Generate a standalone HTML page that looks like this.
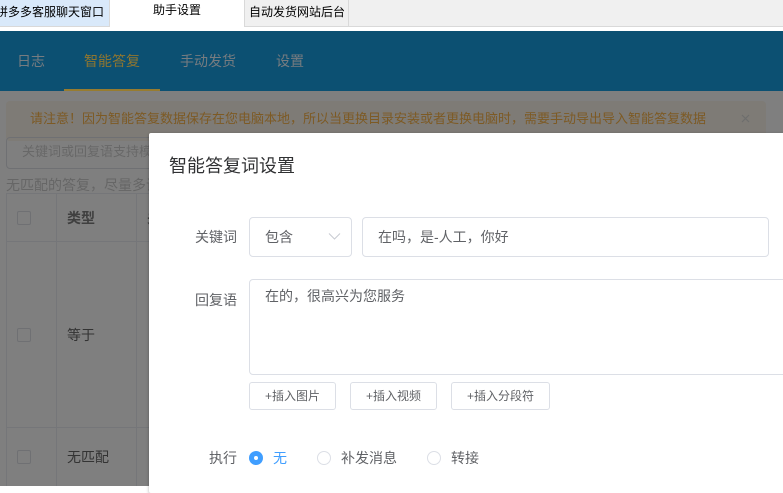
<!DOCTYPE html>
<html><head><meta charset="utf-8">
<style>
html,body{margin:0;padding:0;background:#fff}
body{width:783px;height:486px;position:relative;overflow:hidden;font-family:"Liberation Sans","Noto Sans CJK SC",sans-serif;font-size:14px;color:#5f6266}
div,span{position:absolute;box-sizing:border-box;white-space:nowrap}
.t{line-height:20px;height:20px}
.line{background:#757679}
.cb{width:14px;height:14px;border:1px solid #6f7073;border-radius:2px}
.bd{border:1px solid #dcdfe6;background:#fff;border-radius:4px}
.btn{height:28px;top:382px;font-size:12px;line-height:26px;text-align:center;color:#606266;border-radius:3px;border:1px solid #dcdfe6;background:#fff}
.radio{width:14px;height:14px;border-radius:50%;border:1px solid #dcdfe6;top:451px;background:#fff}
</style></head><body>
<!-- tab strip -->
<div style="left:0;top:0;width:783px;height:27px;background:#f0f0f0;border-bottom:1px solid #d9d9d9"></div>
<div style="left:0;top:0;width:110px;height:27px;background:#d9e9fa;border-right:1px solid #d9d9d9;border-bottom:1px solid #d9d9d9"></div>
<div class="t" style="left:-4px;top:2px;font-size:12px;color:#000">拼多多客服聊天窗口</div>
<div style="left:110px;top:0;width:134px;height:31px;background:#fff"></div>
<div class="t" style="left:153px;top:0;font-size:12px;color:#000">助手设置</div>
<div style="left:244px;top:0;width:105px;height:27px;background:#f0f0f0;border-left:1px solid #d9d9d9;border-right:1px solid #d9d9d9;border-bottom:1px solid #d9d9d9"></div>
<div class="t" style="left:249px;top:2px;font-size:12px;color:#000">自动发货网站后台</div>
<!-- header -->
<div style="left:0;top:31px;width:783px;height:60px;background:#0c5072"></div>
<div class="t" style="left:17px;top:51px;color:#777c80">日志</div>
<div class="t" style="left:84px;top:51px;color:#8f7630">智能答复</div>
<div class="t" style="left:180px;top:51px;color:#777c80">手动发货</div>
<div class="t" style="left:276px;top:51px;color:#777c80">设置</div>
<div style="left:64px;top:89px;width:96px;height:2px;background:#977c30"></div>
<!-- page behind overlay -->
<div style="left:0;top:91px;width:783px;height:395px;background:#7f7f7f"></div>
<div style="left:6px;top:101px;width:760px;height:40px;background:#7e7b76;border-radius:4px"></div>
<div class="t" style="left:30px;top:109px;color:#7d5a24;font-size:13px">请注意！因为智能答复数据保存在您电脑本地，所以当更换目录安装或者更换电脑时，需要手动导出导入智能答复数据</div>
<svg style="position:absolute;left:741px;top:114px" width="9" height="9" viewBox="0 0 9 9"><path d="M1 1L8 8M8 1L1 8" fill="none" stroke="#6d6d6d" stroke-width="1.1"/></svg>
<div style="left:6px;top:137px;width:170px;height:32px;border:1px solid #6f7073;border-radius:4px"></div>
<div class="t" style="left:22px;top:142px;color:#686868;font-size:13px">关键词或回复语支持模糊</div>
<div class="t" style="left:6px;top:175px;color:#666">无匹配的答复，尽量多设置</div>
<div class="line" style="left:6px;top:193px;width:150px;height:1px"></div>
<div class="line" style="left:6px;top:241px;width:150px;height:1px"></div>
<div class="line" style="left:6px;top:427px;width:150px;height:1px"></div>
<div class="line" style="left:6px;top:193px;width:1px;height:293px"></div>
<div class="line" style="left:56px;top:193px;width:1px;height:293px"></div>
<div class="line" style="left:136px;top:193px;width:1px;height:293px"></div>
<div class="cb" style="left:17px;top:211px"></div>
<div class="cb" style="left:17px;top:328px"></div>
<div class="cb" style="left:17px;top:450px"></div>
<div class="t" style="left:67px;top:208px;color:#3f3f3f;font-weight:bold">类型</div>
<div class="t" style="left:147px;top:208px;color:#3f3f3f;font-weight:bold">关键词</div>
<div class="t" style="left:67px;top:325px;color:#333">等于</div>
<div class="t" style="left:67px;top:447px;color:#333">无匹配</div>
<!-- dialog -->
<div style="left:149px;top:133px;width:640px;height:360px;background:#fff;border-radius:2px;box-shadow:0 1px 3px rgba(0,0,0,.3)"></div>
<div class="t" style="left:169px;top:156px;font-size:18px;color:#303133">智能答复词设置</div>
<div class="t" style="left:195px;top:227px;color:#606266">关键词</div>
<div class="bd" style="left:249px;top:217px;width:103px;height:40px"></div>
<div class="t" style="left:265px;top:227px;color:#606266">包含</div>
<svg style="position:absolute;left:327px;top:232px" width="15" height="9" viewBox="0 0 15 9"><path d="M2 1.5L7.5 7L13 1.5" fill="none" stroke="#c9ccd3" stroke-width="1.1"/></svg>
<div class="bd" style="left:362px;top:217px;width:407px;height:40px"></div>
<div class="t" style="left:378px;top:227px;color:#606266">在吗，是-人工，你好</div>
<div class="t" style="left:195px;top:290px;color:#606266">回复语</div>
<div class="bd" style="left:249px;top:279px;width:560px;height:96px"></div>
<div class="t" style="left:265px;top:286px;color:#606266">在的，很高兴为您服务</div>
<div class="btn" style="left:249px;width:87px">+插入图片</div>
<div class="btn" style="left:350px;width:87px">+插入视频</div>
<div class="btn" style="left:451px;width:99px">+插入分段符</div>
<div class="t" style="left:209px;top:448px;color:#606266">执行</div>
<div class="radio" style="left:249px;border:0;background:#409eff"></div>
<div style="left:254px;top:456px;width:4px;height:4px;border-radius:50%;background:#fff"></div>
<div class="t" style="left:273px;top:448px;color:#409eff">无</div>
<div class="radio" style="left:317px"></div>
<div class="t" style="left:341px;top:448px;color:#606266">补发消息</div>
<div class="radio" style="left:427px"></div>
<div class="t" style="left:451px;top:448px;color:#606266">转接</div>
</body></html>
